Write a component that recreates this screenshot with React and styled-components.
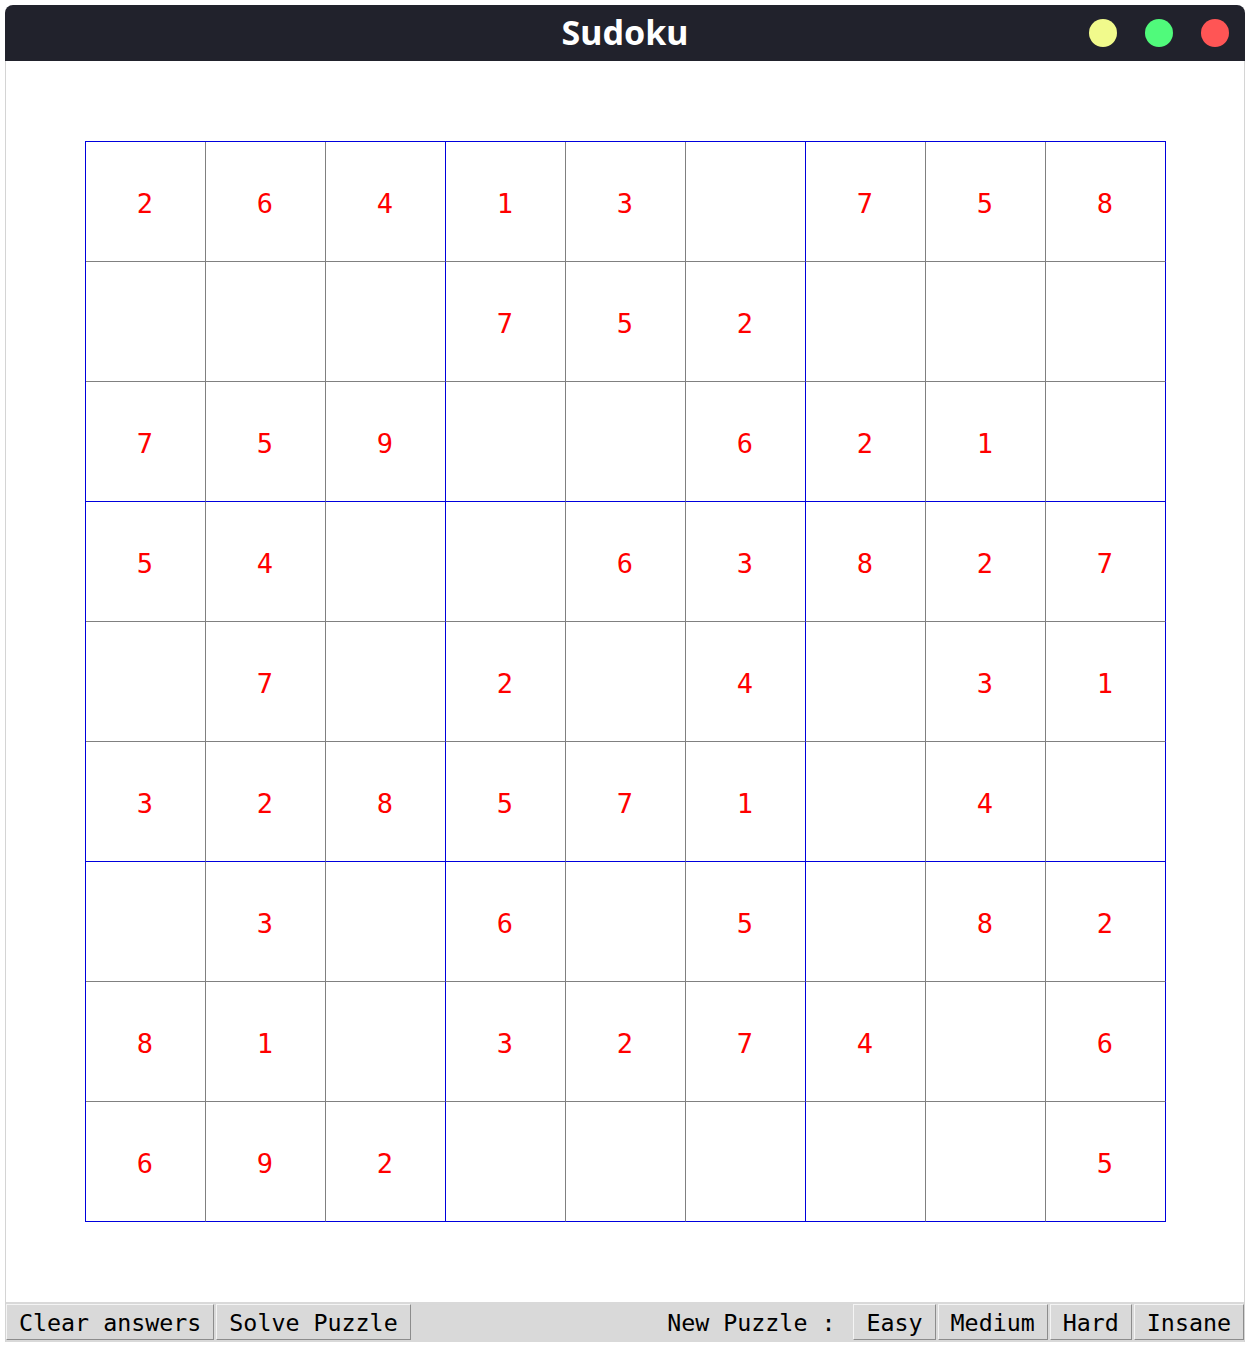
import React from "react";
import styled, { createGlobalStyle } from "styled-components";

const GlobalStyle = createGlobalStyle`
  body {
    margin: 0;
    background: #ffffff;
  }
`;

const puzzle = [
  [2, 6, 4, 1, 3, 0, 7, 5, 8],
  [0, 0, 0, 7, 5, 2, 0, 0, 0],
  [7, 5, 9, 0, 0, 6, 2, 1, 0],
  [5, 4, 0, 0, 6, 3, 8, 2, 7],
  [0, 7, 0, 2, 0, 4, 0, 3, 1],
  [3, 2, 8, 5, 7, 1, 0, 4, 0],
  [0, 3, 0, 6, 0, 5, 0, 8, 2],
  [8, 1, 0, 3, 2, 7, 4, 0, 6],
  [6, 9, 2, 0, 0, 0, 0, 0, 5],
];

const Page = styled.div`
  padding: 5px 0 0 5px;
`;

const Window = styled.div`
  width: 1240px;
  display: flex;
  flex-direction: column;
`;

const TitleBar = styled.div`
  height: 56px;
  background: #21222c;
  border-radius: 8px 8px 0 0;
  display: grid;
  grid-template-columns: 1fr auto 1fr;
  align-items: center;
`;

const Title = styled.div`
  grid-column: 2;
  color: #ffffff;
  font-family: "Noto Sans", "Open Sans", sans-serif;
  font-weight: 700;
  font-size: 34px;
  line-height: 1;
  padding-bottom: 2px;
`;

const Controls = styled.div`
  justify-self: end;
  display: flex;
  gap: 28px;
  padding-right: 16px;
`;

const Dot = styled.span`
  width: 28px;
  height: 28px;
  border-radius: 50%;
  background: ${(p) => p.color};
`;

const Body = styled.div`
  height: 1241px;
  border-left: 1px solid #d4d4d4;
  border-right: 1px solid #d4d4d4;
  display: flex;
  align-items: center;
  justify-content: center;
`;

const Board = styled.div`
  display: grid;
  grid-template-columns: repeat(9, 120px);
  grid-auto-rows: 120px;
  border-left: 1px solid #0000dd;
  border-top: 1px solid #0000dd;
`;

const Cell = styled.div`
  display: flex;
  align-items: center;
  justify-content: center;
  padding-top: 3px;
  border-right: 1px solid ${(p) => (p.$boxRight ? "#0000dd" : "#808080")};
  border-bottom: 1px solid ${(p) => (p.$boxBottom ? "#0000dd" : "#808080")};
  color: #ff0000;
  font-family: "DejaVu Sans Mono", "Liberation Mono", monospace;
  font-size: 27px;
`;

const Bar = styled.div`
  height: 40px;
  background: #d9d9d9;
  border-left: 1px solid #d4d4d4;
  border-right: 1px solid #d4d4d4;
  display: flex;
  align-items: center;
  gap: 2px;
`;

const Button = styled.button`
  height: 36px;
  padding: 0 12px;
  background: #d9d9d9;
  border-top: 1px solid #f4f4f4;
  border-left: 1px solid #f4f4f4;
  border-bottom: 1px solid #8c8c8c;
  border-right: 1px solid #8c8c8c;
  color: #000000;
  font-family: "DejaVu Sans Mono", "Liberation Mono", monospace;
  font-size: 23.3px;
  white-space: pre;
`;

const Spacer = styled.div`
  flex: 1;
`;

const Label = styled.span`
  font-family: "DejaVu Sans Mono", "Liberation Mono", monospace;
  font-size: 23.3px;
  color: #000000;
  margin-right: 16px;
  white-space: pre;
`;

export default function App() {
  return (
    <Page>
      <GlobalStyle />
      <Window>
        <TitleBar>
          <Title>Sudoku</Title>
          <Controls>
            <Dot color="#f1fa8c" />
            <Dot color="#50fa7b" />
            <Dot color="#ff5555" />
          </Controls>
        </TitleBar>
        <Body>
          <Board>
            {puzzle.map((row, r) =>
              row.map((v, c) => (
                <Cell
                  key={r + "-" + c}
                  $boxRight={c % 3 === 2}
                  $boxBottom={r % 3 === 2}
                >
                  {v ? v : ""}
                </Cell>
              ))
            )}
          </Board>
        </Body>
        <Bar>
          <Button>Clear answers</Button>
          <Button>Solve Puzzle</Button>
          <Spacer />
          <Label>New Puzzle :</Label>
          <Button>Easy</Button>
          <Button>Medium</Button>
          <Button>Hard</Button>
          <Button>Insane</Button>
        </Bar>
      </Window>
    </Page>
  );
}
